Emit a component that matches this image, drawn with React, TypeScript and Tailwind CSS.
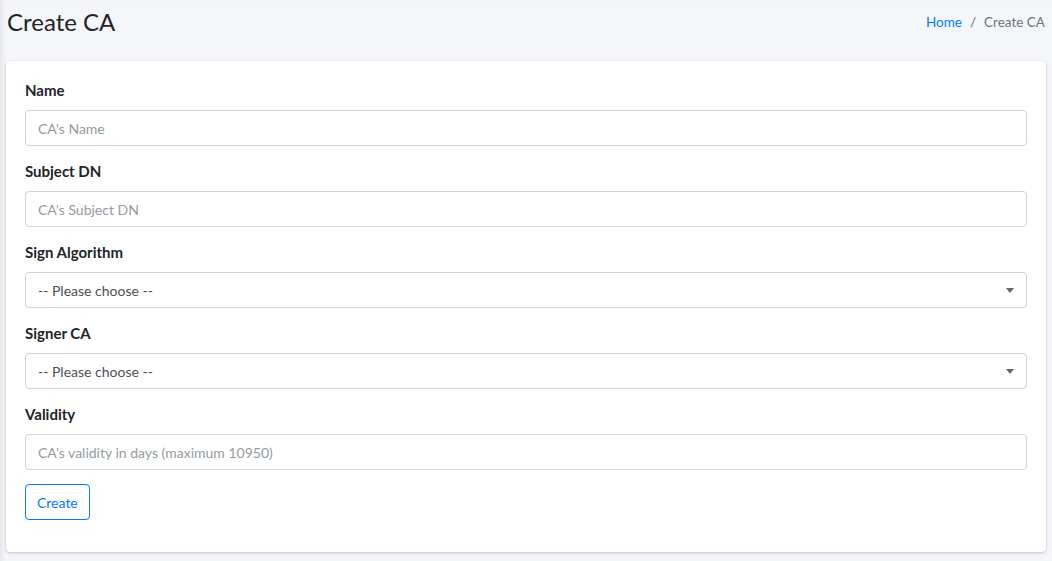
import { ChangeEvent, useState } from 'react'

const inputCls =
  'block h-9 w-full rounded border border-[#ced4da] bg-white px-3 text-[14px] text-[#495057] placeholder:text-[#939ba2] focus:outline-none'

function Field({ label, children }: { label: string; children: React.ReactNode }) {
  return (
    <div className="mb-[14px]">
      <label className="mb-[9px] block text-[15px] font-bold leading-[22px] text-[#212529]">{label}</label>
      {children}
    </div>
  )
}

function Select({ value, onChange }: { value: string; onChange: (e: ChangeEvent<HTMLSelectElement>) => void }) {
  return (
    <div className="relative">
      <select value={value} onChange={onChange} className={inputCls + ' appearance-none pr-8'}>
        <option value="">-- Please choose --</option>
      </select>
      <span className="pointer-events-none absolute right-[13px] top-1/2 -mt-[2px] h-0 w-0 border-x-[4px] border-t-[5px] border-x-transparent border-t-[#666]" />
    </div>
  )
}

export default function App() {
  const [algo, setAlgo] = useState('')
  const [signer, setSigner] = useState('')

  return (
    <div
      className="min-h-[561px] bg-[#f4f6f9] shadow-[inset_6px_0_6px_-4px_rgba(0,0,0,0.08)]"
      style={{ fontFamily: '"Source Sans Pro", Lato, "Noto Sans", sans-serif' }}
    >
      <div className="flex items-center justify-between px-[7px] pb-[21px] pt-[4px]">
        <h1 className="text-[24px] font-normal leading-[36px] text-[#212529]">Create CA</h1>
        <ol className="flex items-center text-[13.5px] text-[#6c757d]">
          <li>
            <a href="#" className="text-[#007bff]">Home</a>
          </li>
          <li className="px-2">/</li>
          <li>Create CA</li>
        </ol>
      </div>

      <div className="mx-[6px] rounded bg-white px-[19px] pb-[32px] pt-[18px] shadow-[0_0_1px_rgba(0,0,0,0.125),0_1px_3px_rgba(0,0,0,0.2)]">
        <form onSubmit={(e) => e.preventDefault()}>
          <Field label="Name">
            <input className={inputCls} placeholder="CA's Name" />
          </Field>
          <Field label="Subject DN">
            <input className={inputCls} placeholder="CA's Subject DN" />
          </Field>
          <Field label="Sign Algorithm">
            <Select value={algo} onChange={(e) => setAlgo(e.target.value)} />
          </Field>
          <Field label="Signer CA">
            <Select value={signer} onChange={(e) => setSigner(e.target.value)} />
          </Field>
          <Field label="Validity">
            <input className={inputCls} placeholder="CA's validity in days (maximum 10950)" />
          </Field>
          <button
            type="submit"
            className="h-9 rounded border border-[#007bff] bg-white px-[11px] text-[14px] text-[#007bff]"
          >
            Create
          </button>
        </form>
      </div>
    </div>
  )
}
